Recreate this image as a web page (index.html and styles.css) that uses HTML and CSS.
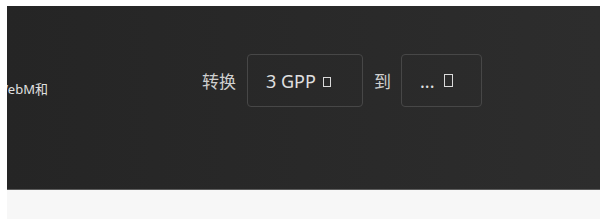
FILE: index.html
```html
<!DOCTYPE html>
<html>
<head>
    <meta charset="UTF-8">
    <title>转换</title>
    <link rel="stylesheet" href="styles.css">
</head>
<body>
    <div class="page">
        <div class="panel">
            <div class="row">
                <div class="side-note">WebM和</div>
                <span class="label label-from">转换</span>
                <div class="picker picker-from">3 GPP <span class="tofu small"></span></div>
                <span class="label label-to">到</span>
                <div class="picker picker-to">... <span class="tofu"></span></div>
            </div>
        </div>
        <div class="footer"></div>
    </div>
</body>
</html>
```

FILE: styles.css
```css
body {
    margin: 0;
    background: #fff;
    font-family: 'Noto Sans', 'Noto Sans CJK SC', sans-serif;
}
.page {
    padding: 6px 0 0 7px;
    height: 213px;
    display: flex;
    flex-direction: column;
}
.panel {
    height: 184px;
    background: linear-gradient(90deg, #252525, #2d2d2d);
    border-bottom: 1px solid #5c5c5c;
    overflow: hidden;
    box-sizing: border-box;
    padding-top: 48px;
}
.footer {
    flex: 1;
    background: #f7f7f7;
}
.row {
    display: flex;
    align-items: center;
    height: 53px;
}
.side-note {
    margin-left: -11px;
    margin-top: 15px;
    width: 206px;
    flex-shrink: 0;
    font-size: 13px;
    color: #e0e0e0;
    white-space: nowrap;
}
.label {
    font-size: 17px;
    color: #cfcfcf;
    font-family: 'Noto Sans CJK SC', sans-serif;
}
.label-from {
    margin-right: 11px;
}
.label-to {
    margin: 0 10px 0 11px;
}
.picker {
    height: 53px;
    box-sizing: border-box;
    border: 1px solid #474747;
    border-radius: 4px;
    display: flex;
    align-items: center;
    padding-left: 18px;
    font-size: 18px;
    color: #e0e0e0;
    white-space: pre;
}
.picker-from {
    width: 116px;
}
.picker-to {
    width: 81px;
}
.tofu {
    display: inline-block;
    width: 7px;
    height: 11px;
    border: 1.5px solid #dadada;
    margin-left: 5px;
}
.tofu.small {
    width: 6px;
    height: 8px;
    margin-left: 2px;
    margin-top: 3px;
}
```
